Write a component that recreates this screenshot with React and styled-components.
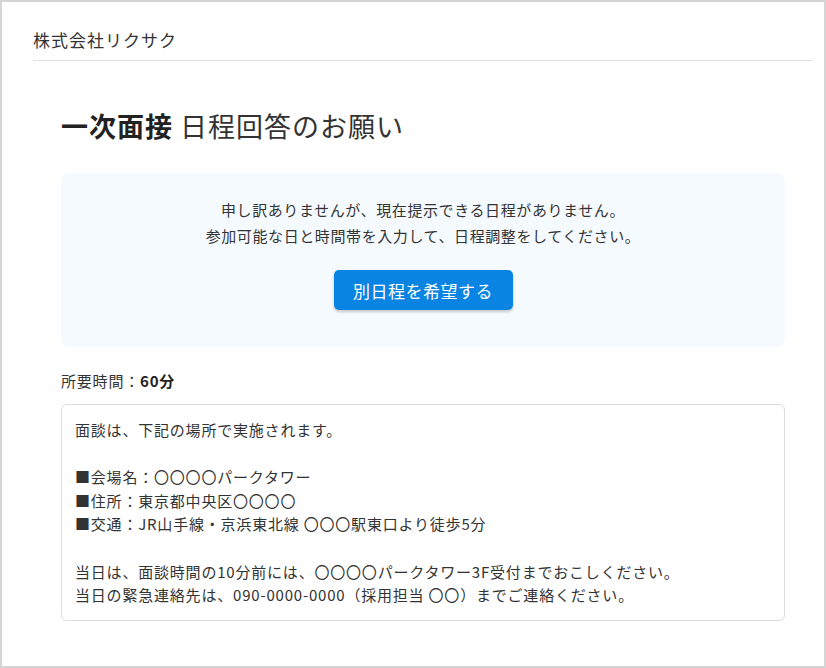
import React from 'react';
import styled, { createGlobalStyle } from 'styled-components';

const GlobalStyle = createGlobalStyle`
  * {
    box-sizing: border-box;
  }
  html,
  body {
    margin: 0;
    padding: 0;
    background: #fff;
  }
  body {
    font-family: 'Noto Sans CJK JP', 'Noto Sans', sans-serif;
    color: #333;
  }
`;

const details = [
  '面談は、下記の場所で実施されます。',
  '',
  '■会場名：〇〇〇〇パークタワー',
  '■住所：東京都中央区〇〇〇〇',
  '■交通：JR山手線・京浜東北線 〇〇〇駅東口より徒歩5分',
  '',
  '当日は、面談時間の10分前には、〇〇〇〇パークタワー3F受付までおこしください。',
  '当日の緊急連絡先は、090-0000-0000（採用担当 〇〇）までご連絡ください。',
];

const App = () => {
  return (
    <>
      <GlobalStyle />
      <Frame>
        <Container>
          <Header>
            <CompanyName>株式会社リクサク</CompanyName>
          </Header>
          <Main>
            <Title>
              <strong>一次面接</strong> 日程回答のお願い
            </Title>
            <Notice>
              <NoticeText>
                申し訳ありませんが、現在提示できる日程がありません。
                <br />
                参加可能な日と時間帯を入力して、日程調整をしてください。
              </NoticeText>
              <RequestBtn type="button">別日程を希望する</RequestBtn>
            </Notice>
            <Duration>
              所要時間：<b>60分</b>
            </Duration>
            <DetailBox>
              {details.map((line, i) => (
                <DetailLine key={i}>{line || '\u00a0'}</DetailLine>
              ))}
            </DetailBox>
          </Main>
        </Container>
      </Frame>
    </>
  );
};

export default App;

const Frame = styled.div`
  width: 826px;
  height: 668px;
  border: 2px solid #d5d5d5;
  background: #fff;
  overflow: hidden;
`;

const Container = styled.div`
  width: 780px;
  margin-left: 31px;
`;

const Header = styled.header`
  padding: 26px 0 8px;
  border-bottom: 1px solid #e2e2e2;
`;

const CompanyName = styled.h1`
  margin: 0;
  font-size: 17px;
  font-weight: 400;
  line-height: 24px;
  letter-spacing: 1px;
  color: #333;
`;

const Main = styled.main`
  padding: 0 28px;
`;

const Title = styled.h2`
  margin: 46px 0 28px;
  font-size: 27px;
  font-weight: 400;
  line-height: 38px;
  letter-spacing: 1px;
  color: #333;

  strong {
    font-weight: 700;
    color: #222;
  }
`;

const Notice = styled.section`
  display: flex;
  flex-direction: column;
  align-items: center;
  padding: 24px 20px 37px;
  border-radius: 8px;
  background: #f5faff;
`;

const NoticeText = styled.p`
  margin: 0 0 21px;
  font-size: 15px;
  line-height: 26px;
  letter-spacing: 0.6px;
  text-align: center;
  color: #333;
`;

const RequestBtn = styled.button`
  width: 179px;
  height: 40px;
  border: none;
  border-radius: 5px;
  background: #0a84e2;
  box-shadow: 0 2px 3px rgba(0, 0, 0, 0.2);
  color: #fff;
  font-family: inherit;
  font-size: 17px;
  letter-spacing: 0.5px;
  cursor: pointer;
`;

const Duration = styled.p`
  margin: 22px 0 11px;
  font-size: 15px;
  line-height: 24px;
  letter-spacing: 0.8px;

  b {
    font-weight: 700;
    color: #222;
  }
`;

const DetailBox = styled.div`
  padding: 13px 13px 13px;
  border: 1px solid #dcdcdc;
  border-radius: 6px;
`;

const DetailLine = styled.p`
  margin: 0;
  font-size: 15px;
  line-height: 23.6px;
  letter-spacing: 0.8px;
  color: #333;
`;
